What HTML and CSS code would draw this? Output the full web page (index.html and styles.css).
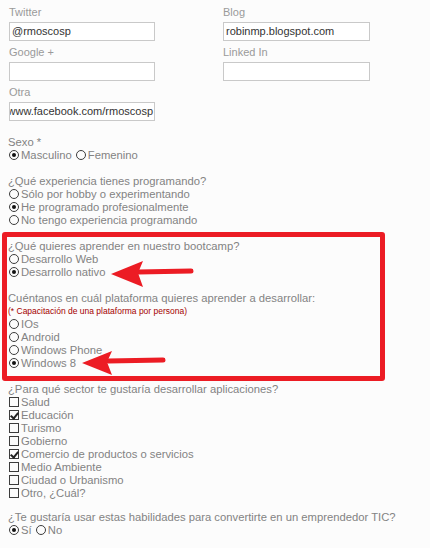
FILE: index.html
```html
<!DOCTYPE html>
<html lang="es">
<head>
    <meta charset="UTF-8">
    <title>Registro - Bootcamp</title>
    <link rel="stylesheet" href="styles.css">
</head>

<body>
    <div class="page">
        <!-- redes sociales -->
        <div class="social">
            <div class="item">
                <span class="lbl">Twitter</span>
                <div class="field">@rmoscosp</div>
            </div>
            <div class="item">
                <span class="lbl">Blog</span>
                <div class="field">robinmp.blogspot.com</div>
            </div>
            <div class="item">
                <span class="lbl">Google +</span>
                <div class="field"></div>
            </div>
            <div class="item">
                <span class="lbl">Linked In</span>
                <div class="field"></div>
            </div>
            <div class="item">
                <span class="lbl">Otra</span>
                <div class="field scrolled"><span>www.facebook.com/rmoscosp</span></div>
            </div>
        </div>

        <div class="group first">
            <div class="q">Sexo *</div>
            <div class="opt"><span class="radio on"></span>Masculino <span class="radio"></span>Femenino</div>
        </div>

        <div class="group">
            <div class="q">¿Qué experiencia tienes programando?</div>
            <div class="opt"><span class="radio"></span>Sólo por hobby o experimentando</div>
            <div class="opt"><span class="radio on"></span>He programado profesionalmente</div>
            <div class="opt"><span class="radio"></span>No tengo experiencia programando</div>
        </div>

        <div class="group">
            <div class="q">¿Qué quieres aprender en nuestro bootcamp?</div>
            <div class="opt"><span class="radio"></span>Desarrollo Web</div>
            <div class="opt"><span class="radio on"></span>Desarrollo nativo</div>
        </div>

        <div class="group">
            <div class="q">Cuéntanos en cuál plataforma quieres aprender a desarrollar:</div>
            <div class="note">(* Capacitación de una plataforma por persona)</div>
            <div class="opt"><span class="radio"></span>IOs</div>
            <div class="opt"><span class="radio"></span>Android</div>
            <div class="opt"><span class="radio"></span>Windows Phone</div>
            <div class="opt"><span class="radio on"></span>Windows 8</div>
        </div>

        <div class="group">
            <div class="q">¿Para qué sector te gustaría desarrollar aplicaciones?</div>
            <div class="opt"><span class="check"></span>Salud</div>
            <div class="opt"><span class="check on"></span>Educación</div>
            <div class="opt"><span class="check"></span>Turismo</div>
            <div class="opt"><span class="check"></span>Gobierno</div>
            <div class="opt"><span class="check on"></span>Comercio de productos o servicios</div>
            <div class="opt"><span class="check"></span>Medio Ambiente</div>
            <div class="opt"><span class="check"></span>Ciudad o Urbanismo</div>
            <div class="opt"><span class="check"></span>Otro, ¿Cuál?</div>
        </div>

        <div class="group last">
            <div class="q">¿Te gustaría usar estas habilidades para convertirte en un emprendedor TIC?</div>
            <div class="opt"><span class="radio on"></span>Sí <span class="radio"></span>No</div>
        </div>

        <!-- marcas rojas encima del formulario -->
        <div class="mark"></div>
        <svg class="arrows" width="430" height="548">
            <line x1="138" y1="272" x2="191" y2="271"></line>
            <polygon points="111,274 143,261 138,273 143,287"></polygon>
            <line x1="108" y1="361" x2="163" y2="360"></line>
            <polygon points="82,363 112,351 107,362 112,375"></polygon>
        </svg>
    </div>
</body>
</html>
```

FILE: styles.css
```css
html,
body {
    margin: 0;
    padding: 0;
}

body {
    background: #fcfcfc;
    font-family: "Liberation Sans", Arial, sans-serif;
    font-size: 11.25px;
    line-height: 13px;
    color: #838383;
}

.page {
    position: relative;
    width: 430px;
    height: 548px;
    padding: 6px 0 0 8px;
    box-sizing: border-box;
}

/* caja de redes 2 columnas */
.social {
    display: grid;
    grid-template-columns: 146px 147px;
    column-gap: 68px;
    row-gap: 5px;
    padding-left: 1px;
    font-size: 11px;
}

.item .lbl {
    display: block;
    color: #9a9a9a;
    margin-bottom: 3px;
}

.field {
    height: 19px;
    box-sizing: border-box;
    border: 1px solid #c9c9c9;
    background: #fff;
    color: #333;
    padding: 0 2px;
    line-height: 17px;
    white-space: nowrap;
    overflow: hidden;
}

/* texto largo, se ve el final */
.field.scrolled {
    display: flex;
    justify-content: flex-end;
    padding: 0 1px 0 0;
}

.group {
    margin-top: 13px;
}

.group.first {
    margin-top: 15px;
}

.group.last {
    margin-top: 11px;
}

.note {
    color: #a40000;
    font-size: 8.5px;
    line-height: 13px;
}

/* radios y checks dibujados */
.radio,
.check {
    display: inline-block;
    position: relative;
    width: 10px;
    height: 10px;
    box-sizing: border-box;
    border: 1px solid #3c3c3c;
    margin: 0 2px 0 1px;
    vertical-align: -1px;
}

.radio {
    border-radius: 50%;
}

.radio.on::after {
    content: "";
    position: absolute;
    left: 2px;
    top: 2px;
    width: 4px;
    height: 4px;
    border-radius: 50%;
    background: #111;
}

.check.on::after {
    content: "";
    position: absolute;
    left: 2px;
    top: 0;
    width: 3px;
    height: 6px;
    border: solid #222;
    border-width: 0 2px 2px 0;
    transform: rotate(40deg);
}

/* recuadro rojo */
.mark {
    position: absolute;
    left: 2px;
    top: 232px;
    width: 383px;
    height: 149px;
    box-sizing: border-box;
    border: 5px solid #ec1c24;
    border-radius: 3px;
}

.arrows {
    position: absolute;
    left: 0;
    top: 0;
    pointer-events: none;
}

.arrows line {
    stroke: #ec1c24;
    stroke-width: 5;
    stroke-linecap: round;
}

.arrows polygon {
    fill: #ec1c24;
}
```
